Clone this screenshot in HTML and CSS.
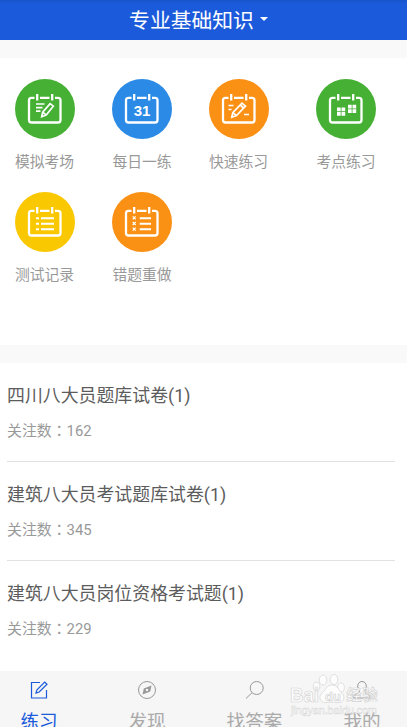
FILE: index.html
```html
<!DOCTYPE html>
<html lang="zh-CN">
<head>
<meta charset="utf-8">
<title>专业基础知识</title>
<link rel="stylesheet" href="styles.css">
</head>
<body>
<svg class="defs" aria-hidden="true">
  <symbol id="calendar" viewBox="0 0 60 60">
    <path d="M19.5 18.8H16.5Q14 18.8 14 21.3V41Q14 43.5 16.5 43.5H43Q45.500 43.500 45.500 41V21.300Q45.500 18.800 43 18.800H40M25 18.800H34.500M22.200 15V21.500M37.200 15V21.500" fill="none" stroke="#fff" stroke-width="2.3"/>
  </symbol>
</svg>
<header class="topbar"><h1>专业基础知识</h1><i class="caret"></i></header>
<main>
  <nav class="menu">
    <a class="entry"><svg class="disc green" viewBox="0 0 60 60"><use href="#calendar"/><g class="line"><path d="M21 25H29.5M21 28.6H27.5M21 32.2H25.5"/><path d="M26.7 37.7L27.7 33.2L35.1 24.7L38.3 27.2L31.2 36Z M28 33.4L31 35.8"/></g></svg><span>模拟考场</span></a>
    <a class="entry"><svg class="disc blue" viewBox="0 0 60 60"><use href="#calendar"/><text x="30" y="37" text-anchor="middle">31</text></svg><span>每日一练</span></a>
    <a class="entry"><svg class="disc orange" viewBox="0 0 60 60"><use href="#calendar"/><g class="line"><path d="M19.5 26.5H24.5M19.5 30.5H22.5M35 35.5H40"/><path d="M22.8 38.2L23.8 33.7L33 24.2L36.5 27L27.5 36.5Z M24 33.8L27.3 36.4M31.2 26L34.6 29"/></g></svg><span>快速练习</span></a>
    <a class="entry"><svg class="disc green" viewBox="0 0 60 60"><use href="#calendar"/><path class="blocks" d="M21 28.5h3.7v3.7H21zM25.5 28.5h3.7v3.7h-3.7zM21 33h3.7v3.7H21zM25.5 33h3.7v3.7h-3.7zM32 25.7h3.7v3.7H32zM36.5 25.7h3.7v3.7h-3.7zM32 30.2h3.7v3.7H32zM36.5 30.2h3.7v3.7h-3.7z"/></svg><span>考点练习</span></a>
    <a class="entry"><svg class="disc yellow" viewBox="0 0 60 60"><use href="#calendar"/><path class="rows" d="M21 26.3H24M26 26.3H39M21 31.8H24M26 31.8H39M21 37.3H24M26 37.3H39"/></svg><span>测试记录</span></a>
    <a class="entry"><svg class="disc orange" viewBox="0 0 60 60"><use href="#calendar"/><path class="rows" d="M27.7 26.3H39M27.7 31.8H39M27.7 37.3H39"/><path class="crosses" d="M20.7 24.3l3 3m0-3l-3 3M20.7 30l3 3m0-3l-3 3M20.7 35.7l3 3m0-3l-3 3"/></svg><span>错题重做</span></a>
  </nav>
  <section class="papers">
    <article><h2>四川八大员题库试卷(1)</h2><p>关注数<span class="colon" lang="zh-TW">：</span>162</p></article>
    <article><h2>建筑八大员考试题库试卷(1)</h2><p>关注数<span class="colon" lang="zh-TW">：</span>345</p></article>
    <article><h2>建筑八大员岗位资格考试题(1)</h2><p>关注数<span class="colon" lang="zh-TW">：</span>229</p></article>
  </section>
</main>
<footer class="tabs">
  <a class="active"><svg viewBox="0 0 20 20"><path d="M11 2.5H2.5V18H17.5V10"/><path d="M7 13L8 9.8L15.7 2L18 4.2L10.2 12Z"/></svg>练习</a>
  <a><svg viewBox="0 0 20 20"><circle cx="10" cy="10" r="8.5"/><path class="needle" fill-rule="evenodd" d="M14.500 5.500L13.200 11.500L5.500 14.500L6.800 8.500ZM10 8.800A1.200 1.200 0 1 0 10 11.200A1.200 1.200 0 1 0 10 8.800Z"/></svg>发现</a>
  <a><svg viewBox="0 0 20 20"><circle cx="11.7" cy="8" r="6.5"/><path d="M7 12.7L1 18.5"/></svg>找答案</a>
  <a><svg viewBox="0 0 20 20"><path d="M10 1.5C7 1.5 5.3 4 5.8 7C6.1 9 7 10.3 7.5 11C7.5 13.5 2.2 13.5 1.5 18H18.5C17.8 13.5 12.5 13.5 12.5 11C13 10.3 13.9 9 14.2 7C14.7 4 13 1.5 10 1.5Z"/></svg>我的</a>
  <svg class="watermark" viewBox="0 0 92 46" aria-hidden="true">
    <g class="paw"><ellipse cx="26.500" cy="14.500" rx="3.300" ry="4.300"/><ellipse cx="33" cy="8" rx="3.800" ry="5"/><ellipse cx="44" cy="7.500" rx="3.800" ry="5"/><ellipse cx="51" cy="15.500" rx="3.300" ry="4.500"/><path d="M42 13C36 13 36 18 32.500 20.500C27 25 31 31.500 37 30.500Q42 29.500 47 30.500C54 31.500 56 25 51.500 20.500C48 18 48 13 42 13Z"/></g>
    <text class="brand" x="0" y="29.500" textLength="29" lengthAdjust="spacingAndGlyphs">Bai</text>
    <text class="du" x="35" y="28.500">du</text>
    <text class="cn" x="56.500" y="28" textLength="31">经验</text>
    <text class="site" x="1" y="42" textLength="86">jingyan.baidu.com</text>
  </svg>
</footer>
</body>
</html>
```
FILE: styles.css
```css
* { box-sizing: border-box; }
body {
  margin: 0;
  height: 727px;
  overflow: hidden;
  display: flex;
  flex-direction: column;
  background: #f9f9f9;
  font-family: Roboto, "Noto Sans CJK SC", sans-serif;
}
h1, h2, p { margin: 0; font-weight: 400; }
.defs { display: none; }

.topbar {
  flex: none;
  height: 40px;
  padding: 2px 10px 0 0;
  display: flex;
  justify-content: center;
  align-items: center;
  gap: 6px;
  background: linear-gradient(#1854cb, #1b5bdb 4px);
  color: #fff;
}
.topbar h1 { font-size: 20.8px; line-height: 38px; }
.caret {
  border: 4px solid transparent;
  border-top-color: #fff;
  border-bottom: 0;
  margin-top: -4px;
}

main { flex: none; height: 631px; padding-top: 18px; }
.menu {
  height: 287px;
  padding: 21px 0 0 14.500px;
  display: grid;
  grid-template-columns: 97.500px 96.500px 107.500px 60px;
  grid-auto-rows: 113px;
  background: #fff;
}
.entry {
  width: 60px;
  display: flex;
  flex-direction: column;
  align-items: center;
  color: #999;
  font-size: 14.800px;
  line-height: 20px;
  white-space: nowrap;
}
.entry span { margin-top: 13px; }
.disc { width: 60px; height: 60px; border-radius: 50%; }
.green { background: #46b034; }
.blue { background: #2a8ae5; }
.orange { background: #fa9014; }
.yellow { background: #fac800; }
.line { fill: none; stroke: #fff; stroke-width: 1.700; }
.disc text { font: bold 15px "Liberation Sans", sans-serif; fill: #fff; }
.blocks { fill: #fff; }
.rows { stroke: #fff; stroke-width: 1.900; }
.crosses { fill: none; stroke: #fff; stroke-width: 1.200; }

.papers { margin-top: 18px; height: 308px; padding: 0 12px 0 7px; background: #fff; }
.papers article { height: 99px; padding-top: 19px; border-bottom: 1px solid #e2e2e2; }
.papers article:last-child { border: 0; }
.papers h2 { font-size: 17.900px; line-height: 27px; color: #5c5c5c; }
.papers p { margin-top: 10px; font-size: 14.900px; line-height: 22px; color: #999; }
.colon { font-family: "Noto Sans CJK TC", sans-serif; }

.tabs {
  position: relative;
  flex: none;
  height: 56px;
  display: grid;
  grid-template-columns: 78px 138px 77px 114px;
  background: #f6f6f6;
}
.tabs a {
  padding-top: 9px;
  display: flex;
  flex-direction: column;
  align-items: center;
  color: #aaa;
  font-size: 18.600px;
  line-height: 28px;
  white-space: nowrap;
}
.tabs a:nth-child(4) { padding-left: 24px; }
.tabs a svg { width: 20px; height: 20px; margin-bottom: 8px; fill: none; stroke: #999; stroke-width: 1; }
.tabs .active { color: #1b5bdb; }
.tabs .active svg { stroke: #1b5bdb; stroke-width: 1.200; }
.tabs a .needle { fill: #999; stroke: none; }
.watermark {
  position: absolute;
  left: 290px;
  top: 1px;
  width: 92px;
  height: 46px;
  fill: #fff;
  stroke: #ccc;
  stroke-width: .7;
  opacity: .8;
}
.watermark .brand { font: bold 21px "Liberation Sans", sans-serif; }
.watermark .du { font: bold 13px "Liberation Sans", sans-serif; }
.watermark .cn { font: bold 15px "Noto Sans CJK SC", sans-serif; }
.watermark .site { font: 11px "Liberation Sans", sans-serif; stroke-width: .4; }
```
